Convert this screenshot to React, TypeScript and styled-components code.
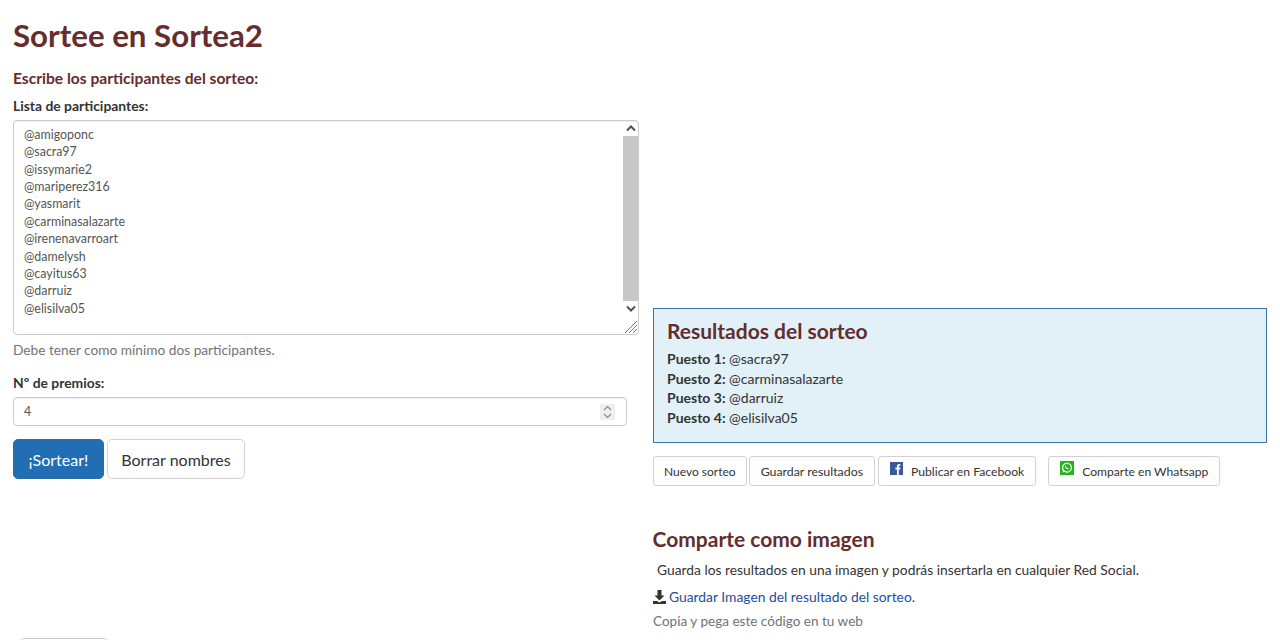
import React from "react";
import styled, { createGlobalStyle } from "styled-components";

const GlobalStyle = createGlobalStyle`
	html, body {
		margin: 0;
		height: 640px;
		overflow: hidden;
		background: #ffffff;
	}
	body {
		font-family: Lato, "Liberation Sans", sans-serif;
		font-size: 14px;
		color: #333333;
	}
	* {
		box-sizing: border-box;
	}
`;

const Page = styled.div`
	display: flex;
	height: 640px;
	overflow: hidden;
`;
const LeftColumn = styled.div`
	width: 653px;
	flex: none;
	padding-left: 13px;
	padding-top: 15px;
`;
const RightColumn = styled.div`
	width: 614px;
	flex: none;
	padding-top: 308px;
`;
const Title = styled.h1`
	margin: 0;
	font-size: 31.25px;
	line-height: 40px;
	font-weight: 700;
	color: #652d2d;
`;
const SubTitle = styled.h4`
	margin: 12px 0 0;
	font-size: 15.6px;
	line-height: 22px;
	font-weight: 700;
	color: #652d2d;
`;
const Label = styled.label`
	display: block;
	font-size: 13.9px;
	line-height: 20px;
	font-weight: 700;
	color: #333333;
`;
const ListLabel = styled(Label)`
	margin-top: 7px;
`;
const TextBox = styled.div`
	display: flex;
	width: 626px;
	height: 215px;
	margin-top: 4px;
	border: 1px solid #cccccc;
	border-radius: 4px;
	box-shadow: inset 0 1px 1px rgba(0, 0, 0, 0.075);
	background: #ffffff;
	position: relative;
`;
const NameList = styled.div`
	flex: 1;
	padding: 4.7px 10px;
	font-size: 12.4px;
	line-height: 17.4px;
	color: #555555;
`;
const Scrollbar = styled.div`
	display: flex;
	flex-direction: column;
	width: 15px;
	height: 100%;
`;
const ScrollArrow = styled.div`
	display: flex;
	align-items: center;
	justify-content: center;
	height: 15px;
	flex: none;
	color: #505050;
`;
const ScrollThumb = styled.div`
	height: 165px;
	flex: none;
	background: #c8c8c8;
`;
const ResizeGrip = styled.svg`
	position: absolute;
	right: 0;
	bottom: 0;
`;
const HelpText = styled.p`
	margin: 5px 0 0;
	font-size: 13.7px;
	line-height: 20px;
	color: #737373;
`;
const PrizeLabel = styled(Label)`
	margin-top: 13px;
`;
const NumberBox = styled.div`
	display: flex;
	align-items: center;
	justify-content: space-between;
	width: 614px;
	height: 29px;
	margin-top: 4px;
	padding: 0 11px 0 10px;
	border: 1px solid #cccccc;
	border-radius: 4px;
	box-shadow: inset 0 1px 1px rgba(0, 0, 0, 0.075);
	font-size: 12.4px;
	color: #555555;
`;
const Spinner = styled.svg`
	display: block;
	background: #efefef;
`;
const ButtonRow = styled.div`
	display: flex;
	gap: 3px;
	margin-top: 13px;
`;
const BigButton = styled.div<{ $primary?: boolean }>`
	display: flex;
	align-items: center;
	justify-content: center;
	height: 40px;
	padding: 0 ${(p) => (p.$primary ? "14.5px" : "13.5px")};
	font-size: 16px;
	border-radius: 5px;
	border: 1px solid ${(p) => (p.$primary ? "#2e6da4" : "#d2d2d2")};
	background: ${(p) => (p.$primary ? "#226eb5" : "#ffffff")};
	color: ${(p) => (p.$primary ? "#ffffff" : "#333333")};
`;
const CutOffButton = styled.div`
	width: 88px;
	height: 30px;
	margin: 159px 0 0 7px;
	border: 1px solid #cccccc;
	border-radius: 4px;
`;
const ResultBox = styled.div`
	height: 135px;
	padding: 7px 13px;
	border: 1px solid #3a75a5;
	background: #e2f1f7;
`;
const ResultTitle = styled.h3`
	margin: 0 0 4px;
	font-size: 21px;
	line-height: 29px;
	font-weight: 700;
	color: #652d2d;
`;
const ResultLine = styled.div`
	font-size: 14px;
	line-height: 19.6px;
	color: #333333;
	b {
		font-weight: 700;
	}
`;
const ActionRow = styled.div`
	display: flex;
	align-items: flex-start;
	margin-top: 13px;
`;
const ActionButton = styled.div<{ $gap?: number; $size?: number }>`
	display: flex;
	align-items: center;
	height: 30px;
	padding: 0 10px;
	margin-right: ${(p) => p.$gap ?? 3}px;
	font-size: ${(p) => p.$size ?? 12}px;
	color: #333333;
	border: 1px solid #d2d2d2;
	border-radius: 3px;
	white-space: nowrap;
`;
const WideActionButton = styled(ActionButton)`
	padding: 0 11px;
`;
const BrandIcon = styled.svg`
	display: block;
	flex: none;
	margin: -6px 8px 0 0;
`;
const ShareTitle = styled.h3`
	margin: 38px 0 0 -0.5px;
	font-size: 21px;
	line-height: 29px;
	font-weight: 700;
	color: #652d2d;
`;
const ShareText = styled.p`
	margin: 7px 0 0 4px;
	font-size: 13.8px;
	line-height: 20px;
	color: #333333;
`;
const DownloadRow = styled.div`
	display: flex;
	align-items: center;
	gap: 3px;
	margin-top: 7px;
	font-size: 13.85px;
	line-height: 20px;
`;
const DownloadLink = styled.a`
	color: #1c4f9c;
`;
const CodeHint = styled.p`
	margin: 4px 0 0;
	font-size: 13.55px;
	line-height: 20px;
	color: #737373;
`;

const participants = [
	"@amigoponc",
	"@sacra97",
	"@issymarie2",
	"@mariperez316",
	"@yasmarit",
	"@carminasalazarte",
	"@irenenavarroart",
	"@damelysh",
	"@cayitus63",
	"@darruiz",
	"@elisilva05",
];

const results = ["@sacra97", "@carminasalazarte", "@darruiz", "@elisilva05"];

const App = () => (
	<Page>
		<GlobalStyle />
		<LeftColumn>
			<Title>Sortee en Sortea2</Title>
			<SubTitle>Escribe los participantes del sorteo:</SubTitle>
			<ListLabel>Lista de participantes:</ListLabel>
			<TextBox>
				<NameList>
					{participants.map((name) => (
						<div key={name}>{name}</div>
					))}
				</NameList>
				<Scrollbar>
					<ScrollArrow>
						<svg width="10" height="7" viewBox="0 0 10 7">
							<path d="M1 5.5 5 1.5l4 4" fill="none" stroke="currentColor" strokeWidth="2" />
						</svg>
					</ScrollArrow>
					<ScrollThumb />
					<ScrollArrow>
						<svg width="10" height="7" viewBox="0 0 10 7">
							<path d="M1 1.5l4 4 4-4" fill="none" stroke="currentColor" strokeWidth="2" />
						</svg>
					</ScrollArrow>
				</Scrollbar>
				<ResizeGrip width="14" height="14" viewBox="0 0 14 14">
					<path d="M1 13 13 1M5 13l8-8M9 13l4-4" stroke="#707070" strokeWidth="1" fill="none" />
				</ResizeGrip>
			</TextBox>
			<HelpText>Debe tener como mínimo dos participantes.</HelpText>
			<PrizeLabel>Nº de premios:</PrizeLabel>
			<NumberBox>
				4
				<Spinner width="15" height="16" viewBox="0 0 15 16">
					<path d="M4 6l3.5-3.5L11 6M4 10l3.5 3.5L11 10" fill="none" stroke="#8a8a8a" strokeWidth="1.1" />
				</Spinner>
			</NumberBox>
			<ButtonRow>
				<BigButton $primary>¡Sortear!</BigButton>
				<BigButton>Borrar nombres</BigButton>
			</ButtonRow>
			<CutOffButton />
		</LeftColumn>
		<RightColumn>
			<ResultBox>
				<ResultTitle>Resultados del sorteo</ResultTitle>
				{results.map((name, i) => (
					<ResultLine key={name}>
						<b>Puesto {i + 1}:</b> {name}
					</ResultLine>
				))}
			</ResultBox>
			<ActionRow>
				<ActionButton $gap={2}>Nuevo sorteo</ActionButton>
				<WideActionButton $size={12.35}>Guardar resultados</WideActionButton>
				<WideActionButton $gap={12} $size={12.2}>
					<BrandIcon width="13" height="13" viewBox="0 0 13 13">
						<rect width="13" height="13" fill="#3b5998" />
						<path d="M7 13V7.5H5.4V5.6H7V4.3C7 2.8 7.9 2 9.2 2h1.2v1.8H9.6c-.6 0-.8.3-.8.8v1h1.6l-.2 1.9H8.8V13z" fill="#ffffff" />
					</BrandIcon>
					Publicar en Facebook
				</WideActionButton>
				<WideActionButton $size={12.1}>
					<BrandIcon width="14" height="14" viewBox="0 0 14 14">
						<rect width="14" height="14" fill="#25b31f" />
						<circle cx="7" cy="6.8" r="4.4" fill="none" stroke="#ffffff" strokeWidth="1.2" />
						<path d="M2.4 11.6l.9-3 2 2z" fill="#ffffff" />
						<path d="M5.3 4.8c-.5.6-.3 1.5.5 2.4s1.8 1.3 2.5.9l.5-.7-1.1-.7-.5.4c-.5-.2-1-.7-1.2-1.2l.4-.5-.6-1z" fill="#ffffff" />
					</BrandIcon>
					Comparte en Whatsapp
				</WideActionButton>
			</ActionRow>
			<ShareTitle>Comparte como imagen</ShareTitle>
			<ShareText>Guarda los resultados en una imagen y podrás insertarla en cualquier Red Social.</ShareText>
			<DownloadRow>
				<svg width="13" height="14" viewBox="0 0 13 14">
					<path d="M4.5 0h4v5.5h3L6.5 10.5l-5-5h3zM0 11h4l2.5 1.5L9 11h4v3H0z" fill="#333333" />
				</svg>
				<DownloadLink>Guardar Imagen del resultado del sorteo.</DownloadLink>
			</DownloadRow>
			<CodeHint>Copia y pega este código en tu web</CodeHint>
		</RightColumn>
	</Page>
);

export default App;
